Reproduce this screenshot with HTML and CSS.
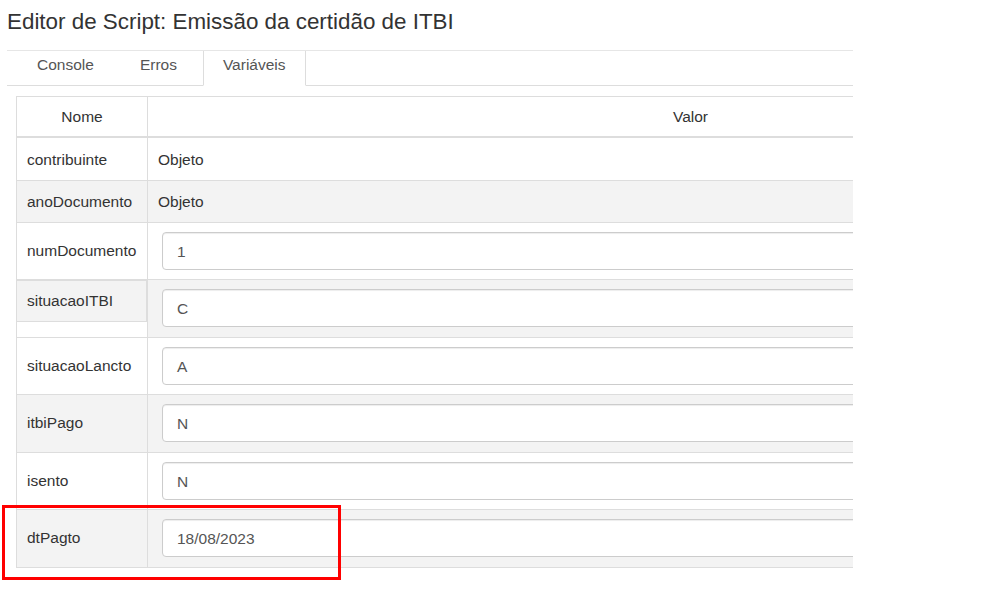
FILE: index.html
```html
<!DOCTYPE html>
<html lang="pt-BR">
<head>
<meta charset="utf-8">
<title>Editor de Script</title>
<link rel="stylesheet" href="styles.css">
</head>
<body>
<div class="page">
  <h1 class="title">Editor de Script: Emissão da certidão de ITBI</h1>
  <div class="panel">
    <ul class="tabs">
      <li class="tab">Console</li>
      <li class="tab">Erros</li>
      <li class="tab active">Variáveis</li>
    </ul>
    <table class="vars">
      <thead>
        <tr><th class="c1">Nome</th><th class="c2">Valor</th></tr>
      </thead>
      <tbody>
        <tr class="first"><td class="c1">contribuinte</td><td class="c2">Objeto</td></tr>
        <tr class="odd"><td class="c1">anoDocumento</td><td class="c2">Objeto</td></tr>
        <tr class="inrow"><td class="c1">numDocumento</td><td class="c2"><div class="field">1</div></td></tr>
        <tr class="inrow odd"><td class="c1 boxed"><div class="labelbox">situacaoITBI</div></td><td class="c2"><div class="field">C</div></td></tr>
        <tr class="inrow"><td class="c1">situacaoLancto</td><td class="c2"><div class="field">A</div></td></tr>
        <tr class="inrow odd"><td class="c1">itbiPago</td><td class="c2"><div class="field">N</div></td></tr>
        <tr class="inrow"><td class="c1">isento</td><td class="c2"><div class="field">N</div></td></tr>
        <tr class="inrow odd"><td class="c1">dtPagto</td><td class="c2"><div class="field">18/08/2023</div></td></tr>
      </tbody>
    </table>
  </div>
  <div class="highlight"></div>
</div>
</body>
</html>
```

FILE: styles.css
```css
html, body {
  margin: 0;
  padding: 0;
  background: #fff;
}
body {
  font-family: "Liberation Sans", Arial, Helvetica, sans-serif;
  font-size: 15.5px;
  line-height: 22px;
  color: #333;
}
.page {
  position: relative;
  padding-left: 7px;
  height: 597px;
  box-sizing: border-box;
}
.title {
  margin: 0;
  padding-top: 9px;
  font-size: 22.4px;
  line-height: 26px;
  font-weight: normal;
  color: #333;
}
.panel {
  margin-top: 15px;
  width: 846px;
  border-top: 1px solid #e6e6e6;
  overflow: hidden;
}
.tabs {
  list-style: none;
  margin: 0;
  padding: 0 0 0 10px;
  display: flex;
  gap: 6px;
  border-bottom: 1px solid #ddd;
}
.tab {
  padding: 3px 19px 9px;
  border: 1px solid transparent;
  border-top: 0;
  margin-bottom: -1px;
  color: #555;
  line-height: 22px;
}
.tab.active {
  background: #fff;
  border-left-color: #ddd;
  border-right-color: #ddd;
  border-bottom-color: #fff;
}
.vars {
  margin: 10px 0 0 9px;
  width: 1218px;
  border-collapse: separate;
  border-spacing: 0;
  border: 1px solid #ddd;
}
.vars th {
  font-weight: normal;
  text-align: center;
  padding: 9px 10px 8px;
  border-bottom: 2px solid #ddd;
  color: #333;
}
.vars td {
  padding: 10px 10px 9px;
  border-top: 1px solid #ddd;
  vertical-align: middle;
  text-align: left;
}
.vars .c1 {
  width: 130px;
  box-sizing: border-box;
}
.vars .c2 {
  border-left: 1px solid #ddd;
}
.vars tr.first td {
  border-top: 0;
  padding: 11px 10px 9px;
}
.vars tr.odd td {
  background: #f3f3f3;
}
.vars tr.inrow td {
  padding-top: 9px;
  padding-bottom: 9px;
}
.vars tr.inrow.odd td {
  padding-bottom: 10px;
}
.vars tr.inrow td.c2 {
  padding-left: 14px;
  padding-right: 0;
}
.vars tr.odd td.boxed {
  background: #fff;
  padding: 0;
  vertical-align: top;
}
.labelbox {
  margin-left: -1px;
  background: #f3f3f3;
  border: 1px solid #ddd;
  padding: 9px 10px;
  line-height: 22px;
}
.field {
  height: 38px;
  box-sizing: border-box;
  border: 1px solid #ccc;
  border-radius: 4px;
  background: #fff;
  padding: 1px 14px 0;
  line-height: 35px;
  color: #555;
  box-shadow: inset 0 1px 1px rgba(0, 0, 0, 0.075);
}
.highlight {
  position: absolute;
  left: 2px;
  top: 505px;
  width: 339px;
  height: 75px;
  box-sizing: border-box;
  border: 3px solid #ff0000;
}
```
